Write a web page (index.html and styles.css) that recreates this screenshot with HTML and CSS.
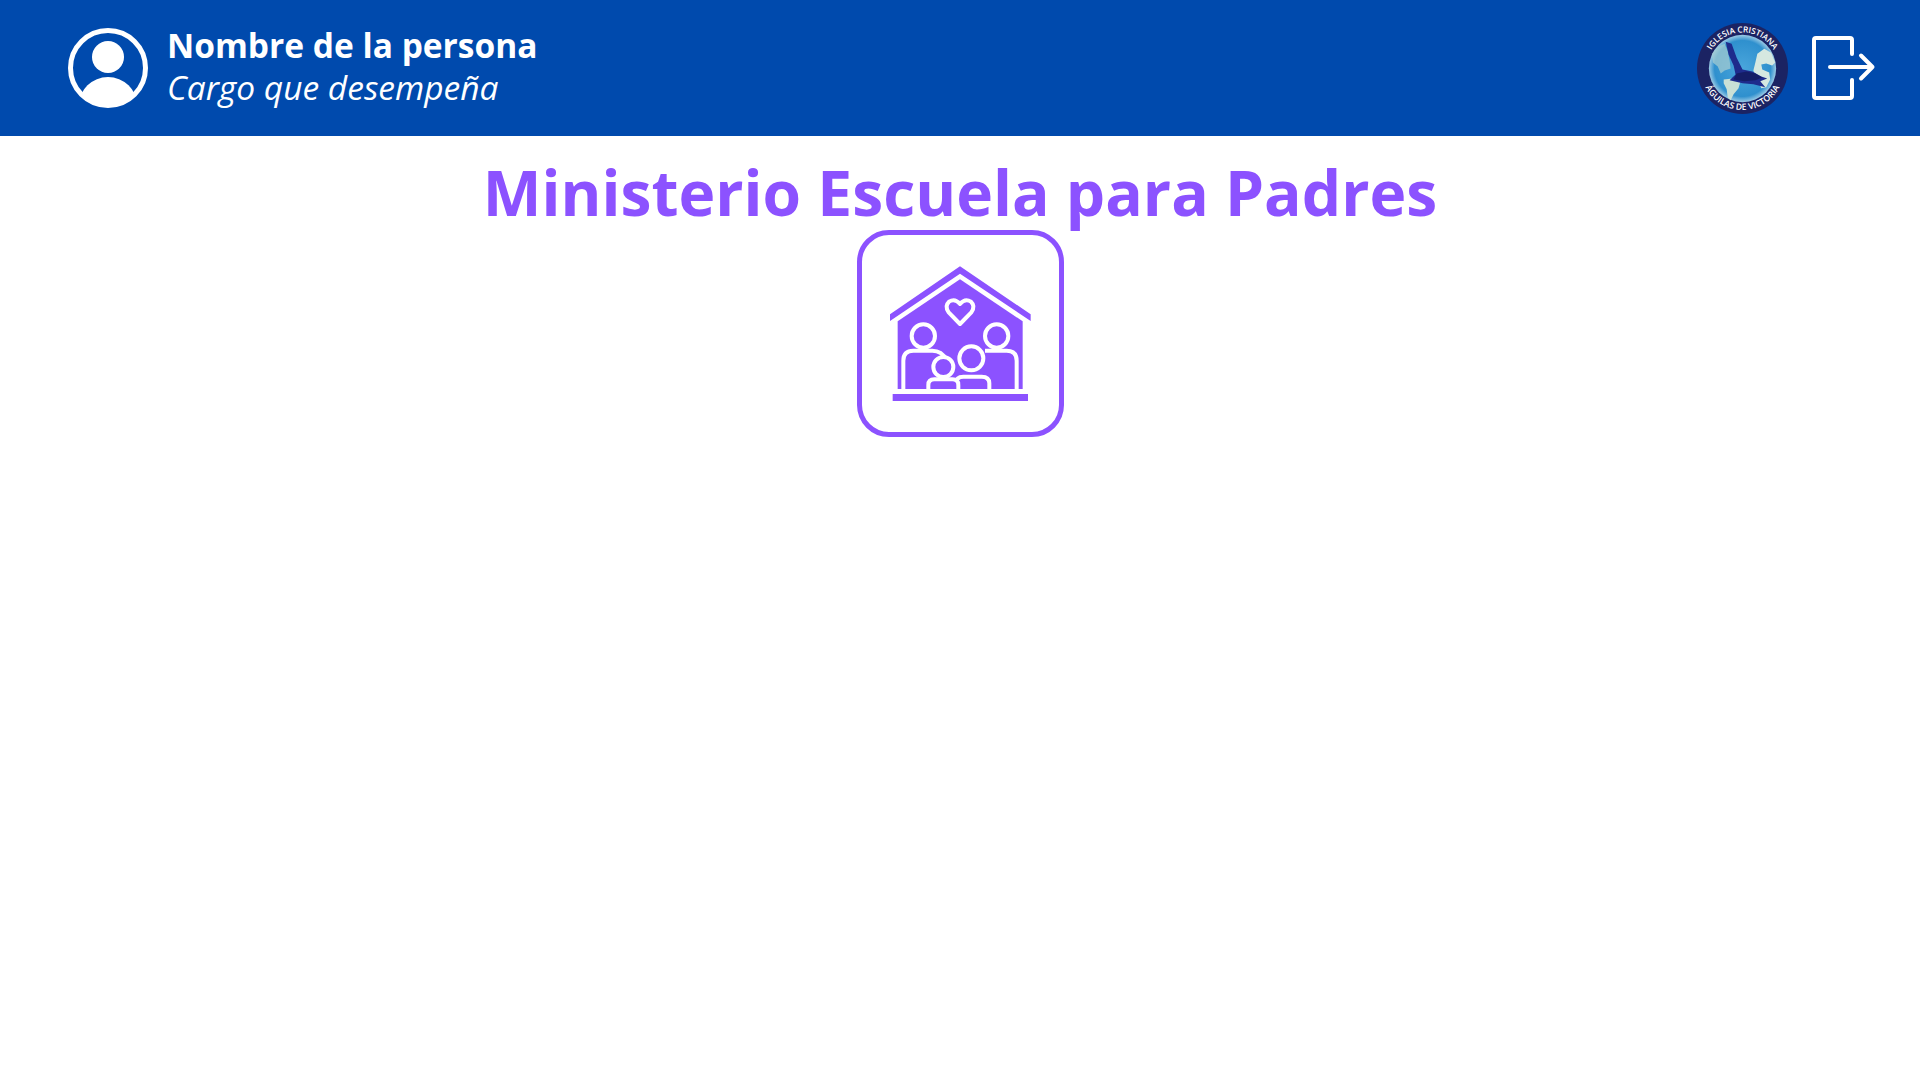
FILE: index.html
```html
<!DOCTYPE html>
<html lang="es">
<head>
  <meta charset="UTF-8">
  <meta name="viewport" content="width=device-width, initial-scale=1.0">
  <title>Ministerio Escuela para Padres</title>
  <link rel="stylesheet" href="styles.css">
</head>
<body>
  <header class="topbar">
    <div class="persona">
      <svg class="persona-icon" viewBox="0 0 80 80">
        <defs>
          <clipPath id="recorte"><circle cx="40" cy="40" r="37"/></clipPath>
        </defs>
        <circle cx="40" cy="40" r="37.5" fill="none" stroke="#fff" stroke-width="5"/>
        <circle cx="40" cy="29" r="16" fill="#fff"/>
        <ellipse cx="40" cy="77" rx="29" ry="28" fill="#fff" clip-path="url(#recorte)"/>
      </svg>
      <div class="persona-datos">
        <div class="persona-nombre">Nombre de la persona</div>
        <div class="persona-cargo">Cargo que desempeña</div>
      </div>
    </div>
    <div class="acciones">
      <svg class="logo" viewBox="0 0 92 92">
        <defs>
          <radialGradient id="mar" cx="50%" cy="50%" r="52%">
            <stop offset="0" stop-color="#4aa6dc"/>
            <stop offset="0.8" stop-color="#2f90ce"/>
            <stop offset="1" stop-color="#b4d8ea"/>
          </radialGradient>
          <path id="arco-arriba" d="M9.5 46 A36.5 36.5 0 0 1 82.5 46"/>
          <path id="arco-abajo" d="M4 46 A42 42 0 0 0 88 46"/>
        </defs>
        <circle cx="46" cy="46" r="46" fill="#1b2363"/>
        <circle cx="46" cy="46" r="34" fill="url(#mar)"/>
        <path d="M15 31l6-7 7-3 3 7 2 10 1 8-6 2-4 3-3-7-5-4z" fill="#a9cfd2" opacity=".7"/>
        <path d="M27 57l9-1 8 3-2 7-5 6-3 6-3-3-1-8-3-6z" fill="#c9e0d6"/>
        <path d="M61 31l7-5 7 4 4 10-3 3-6-2-5 1 1 5 7 3 1 7-4 8-5 1-3-7-3-6-2-5 2-8z" fill="#d6e8e0"/>
        <path d="M29 19l6 2 5 14 6 12 10 2 9 5 6 2-7 3 5 6-12-3-11-1-13-3 6-6-2-9-5-11z" fill="#1e2b8c"/>
        <path d="M40 51l10-2 9 2 7 4-7 3-11 1-11-2z" fill="#151d66"/>
        <text class="logo-texto logo-arriba"><textPath href="#arco-arriba" startOffset="50%">IGLESIA CRISTIANA</textPath></text>
        <text class="logo-texto logo-abajo"><textPath href="#arco-abajo" startOffset="50%">ÁGUILAS DE VICTORIA</textPath></text>
      </svg>
      <svg class="salir" viewBox="0 0 64 64">
        <path d="M40 18V4a2 2 0 0 0-2-2H4a2 2 0 0 0-2 2v56a2 2 0 0 0 2 2h34a2 2 0 0 0 2-2V44" fill="none" stroke="#fff" stroke-width="4" stroke-linecap="round"/>
        <path d="M18 31h42.500M49 19.500l11.500 11.500-11.500 11.500" fill="none" stroke="#fff" stroke-width="4" stroke-linecap="round" stroke-linejoin="round"/>
      </svg>
    </div>
  </header>

  <main class="contenido">
    <h1 class="titulo">Ministerio Escuela para Padres</h1>
    <div class="tarjeta">
      <svg class="familia" viewBox="51 45 591 591">
        <polygon class="morado" points="135,283 345,139 557,283 557,303 345,161 135,303"/>
        <polygon class="morado" points="345,178 533,304 533,507 158,507 158,304"/>
        <path class="linea" d="M345 312 L311 277 Q298 258 312 245 Q330 234 345 252 Q360 234 378 245 Q392 258 379 277 Z"/>
        <path class="trazo" d="M175 507 V422 Q175 392 205 392 H262 Q290 392 305 420"/>
        <circle class="linea" cx="235" cy="348" r="35"/>
        <path class="trazo" d="M515 507 V422 Q515 392 485 392 H420"/>
        <circle class="linea" cx="455" cy="348" r="35"/>
        <path class="linea" d="M333 507 V490 Q333 470 355 470 H410 Q433 470 433 490 V507"/>
        <circle class="linea" cx="379" cy="415" r="36"/>
        <path class="linea" d="M250 507 V495 Q250 478 268 478 H322 Q340 478 340 495 V507"/>
        <circle class="linea" cx="295" cy="441" r="30"/>
        <rect class="morado" x="143" y="522" width="406" height="21"/>
      </svg>
    </div>
  </main>
</body>
</html>
```

FILE: styles.css
```css
body { margin: 0; background: #fff; font-family: "Open Sans", "Noto Sans", sans-serif; }
.topbar { height: 136px; background: #004aad; color: #fff; display: flex; justify-content: space-between; align-items: center; padding: 0 44px 0 68px; }
.persona { display: flex; align-items: center; gap: 19px; }
.persona-icon { width: 80px; height: 80px; display: block; }
.persona-datos { margin-top: -3px; }
.persona-nombre { font-size: 33.5px; font-weight: 700; line-height: 41.5px; }
.persona-cargo { font-size: 33.5px; font-style: italic; line-height: 41.5px; }
.acciones { display: flex; align-items: center; gap: 24px; }
.logo { width: 91px; height: 91px; display: block; }
.logo-texto { fill: #fff; text-anchor: middle; font-family: "Open Sans", sans-serif; font-weight: 600; }
.logo-arriba { font-size: 8.4px; }
.logo-abajo { font-size: 8.8px; }
.salir { width: 64px; height: 64px; display: block; }
.contenido { display: flex; flex-direction: column; align-items: center; }
.titulo { margin: 0; padding-top: 17px; color: #8c52ff; font-size: 62.3px; font-weight: 700; line-height: 77px; }
.tarjeta { width: 197px; height: 197px; border: 5px solid #8c52ff; border-radius: 32px; display: flex; }
.familia { width: 197px; height: 197px; display: block; }
.morado { fill: #8c52ff; }
.linea { fill: #8c52ff; stroke: #fff; stroke-width: 12; stroke-linejoin: round; }
.trazo { fill: none; stroke: #fff; stroke-width: 12; }
```
